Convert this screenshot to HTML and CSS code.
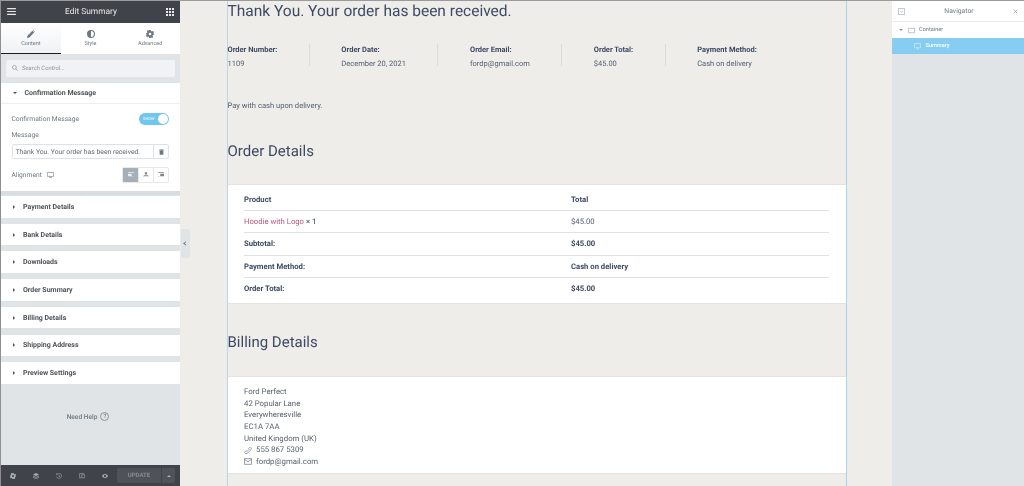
FILE: index.html
```html
<!DOCTYPE html>
<html lang="en">
<head>
    <meta charset="UTF-8">
    <title>Edit Summary</title>
    <link rel="stylesheet" href="styles.css">
</head>
<body>

<!-- Left settings panel -->
<aside class="panel">
    <header class="panel-head">
        <svg class="head-icon" viewBox="0 0 10 8"><path d="M0 0h10v1.300H0zM0 3.300h10v1.300H0zM0 6.700h10V8H0z"/></svg>
        <span>Edit Summary</span>
        <svg class="head-icon grid-icon" viewBox="0 0 8 8"><path d="M0 0h2v2H0zM3 0h2v2H3zM6 0h2v2H6zM0 3h2v2H0zM3 3h2v2H3zM6 3h2v2H6zM0 6h2v2H0zM3 6h2v2H3zM6 6h2v2H6z"/></svg>
    </header>

    <nav class="tabs">
        <div class="tab active">
            <svg class="tab-icon" viewBox="0 0 10 10"><path d="M0 10l.6-2.800L6.800 1l2.200 2.200L2.800 9.400zM7.400.4l.5-.4 2.100 2.100-.5.5z"/></svg>
            <span>Content</span>
        </div>
        <div class="tab">
            <svg class="tab-icon" viewBox="0 0 10 10"><path d="M5 0a5 5 0 1 1 0 10A5 5 0 0 1 5 0zm0 1.400v7.200a3.600 3.600 0 0 0 0-7.200z" fill-rule="evenodd"/></svg>
            <span>Style</span>
        </div>
        <div class="tab">
            <svg class="tab-icon" viewBox="0 0 10 10"><path d="M4 0h2l.3 1.400 1.100.5L8.600 1.100 10 2.500 9.100 3.700l.5 1.100L10 5v1l-1.300.3-.5 1.100.8 1.200-1.400 1.400-1.200-.8-.4.800H4l-.3-1.300-1.100-.5-1.200.8L0 7.600l.8-1.200-.5-1.100L0 5V4l1.300-.3.500-1.100L1 1.400 2.400 0l1.200.8zM5 3.300a1.700 1.700 0 1 0 0 3.400 1.700 1.700 0 0 0 0-3.400z" fill-rule="evenodd"/></svg>
            <span>Advanced</span>
        </div>
    </nav>

    <div class="search-wrap">
        <div class="search">
            <svg class="search-icon" viewBox="0 0 10 10"><circle cx="4" cy="4" r="3.200"/><path d="M6.400 6.400L9.600 9.600"/></svg>
            <span>Search Control...</span>
        </div>
    </div>

    <section class="open-section">
        <div class="section-title open"><i class="caret-down"></i>Confirmation Message</div>
        <div class="section-body">
            <div class="control-row">
                <span>Confirmation Message</span>
                <div class="switch"><span>SHOW</span><i></i></div>
            </div>
            <div class="control-label">Message</div>
            <div class="message-input">
                <span>Thank You. Your order has been received.</span>
                <b>
                    <svg viewBox="0 0 8 9"><path d="M0 1h8v1H0zM1 2.600h6V9H1zM2.500 0h3v.8h-3z"/></svg>
                </b>
            </div>
            <div class="control-row align-row">
                <span>Alignment</span>
                <svg class="monitor" viewBox="0 0 10 8"><path d="M.5.500h9v5.500h-9zM3 7.500h4"/></svg>
                <div class="align-group">
                    <b class="on"><svg viewBox="0 0 8 7"><path d="M0 0h8v1H0zM0 2h5v3H0zM0 6h8v1H0z"/></svg></b>
                    <b><svg viewBox="0 0 8 7"><path d="M2.500 0h3v3h-3zM1 4h6v1H1zM0 6h8v1H0z"/></svg></b>
                    <b><svg viewBox="0 0 8 7"><path d="M0 0h8v1H0zM3 2h5v3H3zM0 6h8v1H0z"/></svg></b>
                </div>
            </div>
        </div>
    </section>

    <div class="section-title"><i class="caret-right"></i>Payment Details</div>
    <div class="section-title"><i class="caret-right"></i>Bank Details</div>
    <div class="section-title"><i class="caret-right"></i>Downloads</div>
    <div class="section-title"><i class="caret-right"></i>Order Summary</div>
    <div class="section-title"><i class="caret-right"></i>Billing Details</div>
    <div class="section-title"><i class="caret-right"></i>Shipping Address</div>
    <div class="section-title"><i class="caret-right"></i>Preview Settings</div>

    <div class="need-help">Need Help <i>?</i></div>

    <footer class="panel-foot">
        <svg viewBox="0 0 10 10"><path d="M4 0h2l.3 1.400 1.100.5L8.600 1.100 10 2.500 9.100 3.700l.5 1.100L10 5v1l-1.300.3-.5 1.100.8 1.200-1.400 1.400-1.200-.8-.4.800H4l-.3-1.300-1.100-.5-1.200.8L0 7.600l.8-1.200-.5-1.100L0 5V4l1.300-.3.500-1.100L1 1.400 2.400 0l1.200.8zM5 3.300a1.700 1.700 0 1 0 0 3.400 1.700 1.700 0 0 0 0-3.400z" fill-rule="evenodd"/></svg>
        <svg viewBox="0 0 10 10"><path d="M5 0l5 2.500L5 5 0 2.500zM0 4l5 2.500L10 4v1.500L5 8 0 5.500zM0 6.800l5 2.500 5-2.500V8l-5 2-5-2z"/></svg>
        <svg class="line" viewBox="0 0 10 10"><path d="M1.500 2A4.300 4.300 0 1 1 .8 6M5 2.800V5.400l1.800 1M.5.800v2h2"/></svg>
        <svg class="line" viewBox="0 0 10 10"><path d="M1 7V1h7v1M4.500 3h5v5h-5zM0 8h4"/></svg>
        <svg viewBox="0 0 10 10"><path d="M0 5c1.500-2.600 3-3.400 5-3.400S8.500 2.400 10 5c-1.500 2.600-3 3.400-5 3.400S1.500 7.600 0 5zm5-2a2 2 0 1 0 0 4 2 2 0 0 0 0-4z" fill-rule="evenodd"/></svg>
        <div class="update">
            <span>UPDATE</span>
            <b><i></i></b>
        </div>
    </footer>
</aside>

<!-- Page preview -->
<main class="preview">
    <div class="collapse-tab"><i></i></div>
    <div class="page">
        <h1>Thank You. Your order has been received.</h1>

        <ul class="overview">
            <li><strong>Order Number:</strong>1109</li>
            <li><strong>Order Date:</strong>December 20, 2021</li>
            <li><strong>Order Email:</strong>fordp@gmail.com</li>
            <li><strong>Order Total:</strong>$45.00</li>
            <li><strong>Payment Method:</strong>Cash on delivery</li>
        </ul>

        <p class="pay-note">Pay with cash upon delivery.</p>

        <h2>Order Details</h2>
        <div class="card">
            <div class="order-row head"><span>Product</span><span>Total</span></div>
            <div class="order-row"><span><a href="#">Hoodie with Logo</a> <b>× 1</b></span><span>$45.00</span></div>
            <div class="order-row head"><span>Subtotal:</span><span>$45.00</span></div>
            <div class="order-row head"><span>Payment Method:</span><span>Cash on delivery</span></div>
            <div class="order-row head"><span>Order Total:</span><span>$45.00</span></div>
        </div>

        <h2 class="billing-title">Billing Details</h2>
        <address class="card address">
            Ford Perfect<br>
            42 Popular Lane<br>
            Everywheresville<br>
            EC1A 7AA<br>
            United Kingdom (UK)
            <div class="contact">
                <svg viewBox="0 0 10 10"><path d="M1 9c-1-1-.8-1.800 0-2.600l1-.8c.5-.4 1-.2 1.400.3l.4.4 2.800-2.900-.4-.4c-.4-.5-.5-1 0-1.400L7 .800c.8-.7 1.500-1 2.400 0 .9 1 .3 2.800-2.300 5.600S2 10 1 9z"/></svg>
                555 867 5309
            </div>
            <div class="contact">
                <svg viewBox="0 0 10 8"><path d="M.5.500h9v7h-9zM.5 1l4.500 3.500L9.500 1"/></svg>
                fordp@gmail.com
            </div>
        </address>
    </div>
</main>

<!-- Navigator -->
<aside class="navigator">
    <header class="nav-head">
        <svg class="nav-box" viewBox="0 0 8 8"><path d="M.5.500h7v7h-7zM2.500 3.500L4 5l1.500-1.500"/></svg>
        <span>Navigator</span>
        <svg class="nav-close" viewBox="0 0 8 8"><path d="M1 1l6 6M7 1L1 7"/></svg>
    </header>
    <div class="nav-row">
        <i class="caret-down small"></i>
        <svg class="nav-box" viewBox="0 0 8 6"><path d="M.5.500h7v5h-7z"/></svg>
        Container
    </div>
    <div class="nav-row selected">
        <svg class="nav-box" viewBox="0 0 8 8"><path d="M.5.500h7v5h-7zM4 5.500V8"/></svg>
        Summary
    </div>
</aside>

</body>
</html>
```

FILE: styles.css
```css
* {
    box-sizing: border-box;
}
html {
    background-color: #eeedea;
}
body {
    margin: 0;
    display: flex;
    height: 486px;
    overflow: hidden;
    font-family: Roboto, sans-serif;
    text-rendering: geometricPrecision;
    background-color: #eeedea;
    border-top: 1px solid #9a9b9d;
    filter: blur(.35px);
}

/* Left panel */
.panel {
    width: 180px;
    flex: none;
    display: flex;
    flex-direction: column;
    background-color: #e1e4e7;
    border-left: 1px solid #8d8f92;
}
.panel-head {
    height: 21.500px;
    flex: none;
    display: flex;
    align-items: center;
    justify-content: space-between;
    padding: 0 6px;
    background-color: #404349;
    color: #e8e9ea;
    font-size: 8.400px;
}
.head-icon {
    width: 9px;
    height: 7px;
    fill: #e8e9ea;
}
.grid-icon {
    width: 8px;
    height: 8px;
}
.tabs {
    height: 31px;
    flex: none;
    display: flex;
    background-color: #fff;
}
.tab {
    flex: 1;
    display: flex;
    flex-direction: column;
    align-items: center;
    justify-content: center;
    gap: 3px;
    font-size: 5.500px;
    color: #6d7882;
    padding-top: 1px;
}
.tab.active {
    background: linear-gradient(#fff, #f0f1f3);
    border-bottom: 1px solid #1a1c20;
}
.tab-icon {
    width: 8px;
    height: 8px;
    fill: #6d7882;
}
.search-wrap {
    height: 29px;
    flex: none;
    padding: 6px 5px 5.500px;
}
.search {
    height: 17px;
    display: flex;
    align-items: center;
    gap: 4px;
    padding-left: 6px;
    background-color: #f1f2f3;
    border-radius: 2px;
    font-size: 6px;
    font-style: italic;
    color: #8b939b;
}
.search-icon {
    width: 6px;
    height: 6px;
    fill: none;
    stroke: #7d858d;
    stroke-width: 1;
}
.section-title {
    height: 21.600px;
    flex: none;
    display: flex;
    align-items: center;
    margin-bottom: 6.100px;
    padding-left: 12px;
    background-color: #fff;
    font-size: 7px;
    font-weight: 700;
    color: #4f5359;
}
.section-title.open {
    margin-bottom: 0;
    border-bottom: 1px solid #eceef0;
}
.caret-right {
    width: 0;
    height: 0;
    margin-right: 8px;
    border-left: 2.500px solid #4f5359;
    border-top: 2px solid transparent;
    border-bottom: 2px solid transparent;
}
.caret-down {
    width: 0;
    height: 0;
    margin-right: 7.500px;
    border-top: 2.500px solid #4f5359;
    border-left: 2.500px solid transparent;
    border-right: 2.500px solid transparent;
}
.open-section {
    margin-bottom: 5px;
}
.section-body {
    height: 87px;
    padding: 8px 11px 0 10.500px;
    background-color: #fff;
    font-size: 6.700px;
    color: #6d7882;
    box-shadow: 0 4px 0 #d9dce0;
}
.control-row {
    display: flex;
    align-items: center;
    justify-content: space-between;
    height: 13px;
}
.switch {
    width: 30px;
    height: 12px;
    display: flex;
    align-items: center;
    justify-content: space-between;
    padding: 0 1px 0 4px;
    border-radius: 6px;
    background-color: #71c6ee;
    color: #fff;
    font-size: 4px;
}
.switch i {
    width: 10px;
    height: 10px;
    border-radius: 50%;
    background-color: #fff;
}
.control-label {
    margin-top: 5px;
    line-height: 10px;
}
.message-input {
    height: 15px;
    margin-top: 4px;
    display: flex;
    align-items: center;
    justify-content: space-between;
    border: 1px solid #dfe2e5;
    border-radius: 2px;
    padding-left: 3px;
    color: #5f6871;
    font-size: 6.800px;
    white-space: nowrap;
}
.message-input b {
    width: 15px;
    height: 100%;
    display: flex;
    align-items: center;
    justify-content: center;
    border-left: 1px solid #dfe2e5;
}
.message-input svg {
    width: 5px;
    height: 6px;
    fill: #6d7882;
}
.align-row {
    margin-top: 8px;
    height: 15px;
    justify-content: flex-start;
}
.monitor {
    width: 7px;
    height: 6px;
    margin-left: 5px;
    fill: none;
    stroke: #7d858d;
    stroke-width: 1;
}
.align-group {
    margin-left: auto;
    display: flex;
    border: 1px solid #e6e8ea;
    border-radius: 2px;
}
.align-group b {
    width: 15px;
    height: 14px;
    display: flex;
    align-items: center;
    justify-content: center;
    border-left: 1px solid #e6e8ea;
}
.align-group b.on {
    background-color: #a4afb7;
    border-left: 0;
}
.align-group svg {
    width: 6px;
    height: 5.500px;
    fill: #7d858d;
}
.align-group .on svg {
    fill: #e9ebed;
}
.need-help {
    flex: 1;
    display: flex;
    align-items: center;
    justify-content: center;
    gap: 3px;
    padding: 0 5px 21px 0;
    font-size: 6.600px;
    font-weight: 500;
    color: #6d7882;
}
.need-help i {
    width: 9px;
    height: 9px;
    display: flex;
    align-items: center;
    justify-content: center;
    border: 1px solid #8b939b;
    border-radius: 50%;
    font-style: normal;
    font-size: 6px;
}
.panel-foot {
    height: 21px;
    flex: none;
    display: flex;
    align-items: center;
    padding-left: 9px;
    background-color: #404349;
}
.panel-foot svg {
    width: 6px;
    height: 6px;
    margin-right: 17px;
    fill: #a4afb7;
}
.panel-foot svg.line {
    fill: none;
    stroke: #a4afb7;
    stroke-width: 1;
}
.update {
    display: flex;
    gap: 1px;
    margin-left: -8px;
    color: #858c94;
    font-size: 6px;
    font-weight: 700;
}
.update span {
    width: 44px;
    height: 15px;
    display: flex;
    align-items: center;
    justify-content: center;
    background-color: #4f5359;
    border-radius: 2px 0 0 2px;
}
.update b {
    width: 13px;
    height: 15px;
    display: flex;
    align-items: center;
    justify-content: center;
    background-color: #4f5359;
    border-radius: 0 2px 2px 0;
}
.update i {
    border-bottom: 2px solid #a4afb7;
    border-left: 2px solid transparent;
    border-right: 2px solid transparent;
}

/* Preview */
.preview {
    position: relative;
    flex: 1;
    min-width: 0;
    padding-left: 46.500px;
    padding-right: 45.500px;
}
.collapse-tab {
    position: absolute;
    left: 1px;
    top: 228px;
    width: 9px;
    height: 29px;
    display: flex;
    align-items: center;
    justify-content: center;
    background-color: #e1e4e7;
    border-radius: 0 2px 2px 0;
}
.collapse-tab i {
    width: 3px;
    height: 3px;
    border-left: 1px solid #6d7882;
    border-bottom: 1px solid #6d7882;
    transform: rotate(45deg);
}
.page {
    height: 100%;
    border-left: 1px solid #bcd6e8;
    border-right: 1px solid #a9d3ec;
    color: #3d4a63;
}
h1 {
    margin: 0;
    height: 32px;
    font-size: 15.500px;
    font-weight: 400;
    line-height: 21px;
}
.overview {
    margin: 11px 0 0;
    padding: 0;
    list-style: none;
    display: flex;
    font-size: 7.500px;
    color: #56606f;
}
.overview li {
    padding-right: 31.500px;
    margin-right: 31.500px;
    border-right: 1px solid #dddcd9;
    height: 22px;
    line-height: 14px;
}
.overview li:last-child {
    border-right: 0;
}
.overview strong {
    display: block;
    margin-top: -1px;
    color: #3d4a63;
    font-weight: 700;
}
.pay-note {
    margin: 35px 0 0;
    font-size: 7.600px;
    line-height: 10px;
    color: #56606f;
}
h2 {
    margin: 31px 0 0;
    font-size: 15px;
    font-weight: 400;
    line-height: 18px;
}
.card {
    background-color: #fff;
    border-top: 1px solid #e2e3e3;
    border-bottom: 1px solid #e2e3e3;
    padding: 4px 16.500px 3px;
}
h2 + .card {
    margin-top: 24px;
}
.order-row {
    display: grid;
    grid-template-columns: 327px 1fr;
    align-items: center;
    height: 22.200px;
    border-bottom: 1px solid #dfe1e3;
    font-size: 7.700px;
    color: #56606f;
}
.order-row:last-child {
    border-bottom: 0;
}
.order-row.head {
    font-weight: 700;
    color: #3d4a63;
}
.order-row a {
    color: #b5567c;
    text-decoration: none;
}
.order-row b {
    font-weight: 500;
}
.billing-title {
    margin-top: 29px;
}
h2 + .address {
    display: block;
    margin-top: 25px;
    height: 98px;
    padding-top: 9px;
    font-style: normal;
    font-size: 7.800px;
    line-height: 11.670px;
    color: #56606f;
}
.contact {
    display: flex;
    align-items: center;
    gap: 4px;
}
.contact svg {
    width: 8px;
    height: 7px;
    fill: none;
    stroke: #56606f;
    stroke-width: .8;
}

/* Navigator */
.navigator {
    width: 132px;
    flex: none;
    background-color: #e1e4e7;
    font-size: 5.600px;
    color: #6d7882;
}
.nav-head {
    height: 21px;
    display: flex;
    align-items: center;
    justify-content: space-between;
    padding: 0 6px;
    background-color: #fff;
    border-bottom: 1px solid #e8eaec;
    font-size: 6.800px;
}
.nav-box {
    width: 7px;
    height: 7px;
    fill: none;
    stroke: #a4afb7;
    stroke-width: .8;
}
.nav-close {
    width: 5px;
    height: 5px;
    fill: none;
    stroke: #8b939b;
    stroke-width: 1;
}
.nav-row {
    height: 16px;
    display: flex;
    align-items: center;
    gap: 4.500px;
    padding-left: 7px;
    background-color: #fff;
}
.caret-down.small {
    margin-right: 0;
    border-top-color: #8b939b;
    border-top-width: 2px;
    border-left-width: 2px;
    border-right-width: 2px;
}
.nav-row.selected {
    padding-left: 22px;
    background-color: #86cdf1;
    color: #fff;
    font-weight: 500;
}
.nav-row.selected .nav-box {
    stroke: #cfeaf8;
}
```
